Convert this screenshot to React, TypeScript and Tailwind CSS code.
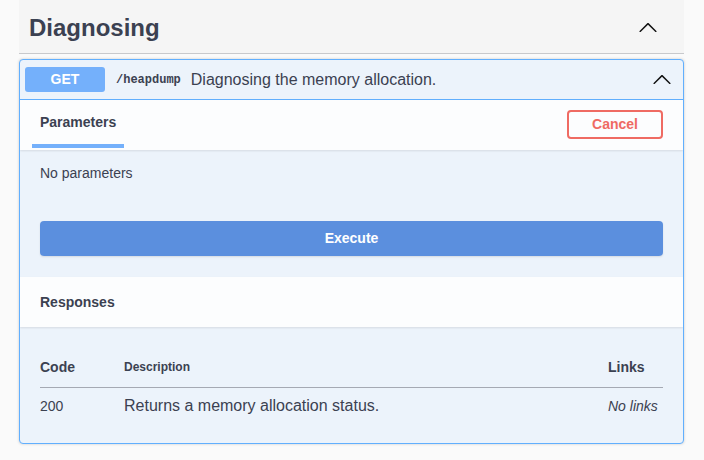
import React from 'react';

const ArrowUp = ({ className }: { className?: string }) => (
  <svg viewBox="0 0 20 20" width={20} height={20} className={className} fill="currentColor">
    <path d="M17.418 14.908c.272.268.709.268.979 0s.271-.701 0-.969l-7.908-7.83c-.27-.268-.707-.268-.979 0l-7.908 7.83c-.27.268-.27.701 0 .969.271.268.709.268.979 0L10 7.767l7.418 7.141z" />
  </svg>
);

export default function App() {
  return (
    <div
      className="w-[704px] h-[460px] bg-[#fafafa] pl-[19px] pr-[20px] text-[#3b4151]"
      style={{ fontFamily: '"Liberation Sans", Arial, sans-serif' }}
    >
      {/* tag header */}
      <div className="h-[54px] bg-[#f5f5f5] border-b border-[#c8c9cc] flex items-center justify-between pl-[10px] pr-[26px]">
        <h3 className="text-[24px] font-bold leading-none pt-[3px]">Diagnosing</h3>
        <ArrowUp className="text-[#111] mt-[1px]" />
      </div>

      {/* operation block */}
      <div className="mt-[5px] border border-[#61affe] rounded-[4px] bg-[#ecf3fb] shadow-[0_0_3px_rgba(0,0,0,0.19)] overflow-hidden">
        <div className="h-[40px] border-b border-[#61affe] flex items-center pl-[5px] pr-[11px]">
          <span className="w-[80px] h-[25px] rounded-[3px] bg-[#74b0fb] text-white text-[14px] font-bold flex items-center justify-center">
            GET
          </span>
          <span
            className="ml-[11px] text-[12px] font-bold text-[#3b4151]"
            style={{ fontFamily: '"Liberation Mono", "DejaVu Sans Mono", monospace' }}
          >
            /heapdump
          </span>
          <span className="ml-[10px] text-[16px] text-[#3b4151]">Diagnosing the memory allocation.</span>
          <ArrowUp className="ml-auto text-[#111] mb-[2px]" />
        </div>

        {/* parameters header */}
        <div className="h-[50px] bg-[#fcfdfe] shadow-[0_1px_2px_rgba(0,0,0,0.1)] relative flex items-center justify-between pl-[12px] pr-[20px]">
          <div className="h-full flex flex-col justify-end">
            <span className="px-[8px] text-[14px] font-bold leading-none pb-[15px]">Parameters</span>
            <div className="h-[4px] w-[92px] bg-[#74b0fb] mb-[2px]" />
          </div>
          <button className="w-[96px] h-[29px] border-2 border-[#ef6b63] rounded-[4px] text-[#ef6b63] text-[14px] font-bold mb-[1px]">
            Cancel
          </button>
        </div>

        {/* parameters body */}
        <div className="px-[20px] pt-[13px] pb-[21px]">
          <p className="text-[14px] leading-[20px]">No parameters</p>
          <button className="mt-[38px] w-full h-[35px] rounded-[4px] bg-[#5b8fde] text-white text-[14px] font-bold shadow-[0_1px_2px_rgba(0,0,0,0.1)]">
            Execute
          </button>
        </div>

        {/* responses header */}
        <div className="h-[50px] bg-[#fcfdfe] shadow-[0_1px_2px_rgba(0,0,0,0.1)] relative flex items-center px-[20px]">
          <h4 className="text-[14px] font-bold">Responses</h4>
        </div>

        {/* responses table */}
        <div className="px-[20px] pt-[31px] pb-[27px]">
          <div className="flex items-center h-[18px] font-bold">
            <span className="w-[84px] text-[14px]">Code</span>
            <span className="flex-1 text-[12px]">Description</span>
            <span className="w-[55px] text-[14px]">Links</span>
          </div>
          <div className="mt-[11px] border-t border-[#a5a9b3]" />
          <div className="flex items-center h-[20px] mt-[8px]">
            <span className="w-[84px] text-[14px]">200</span>
            <span className="flex-1 text-[16px]">Returns a memory allocation status.</span>
            <span className="w-[55px] text-[14px] italic">No links</span>
          </div>
        </div>
      </div>
    </div>
  );
}
